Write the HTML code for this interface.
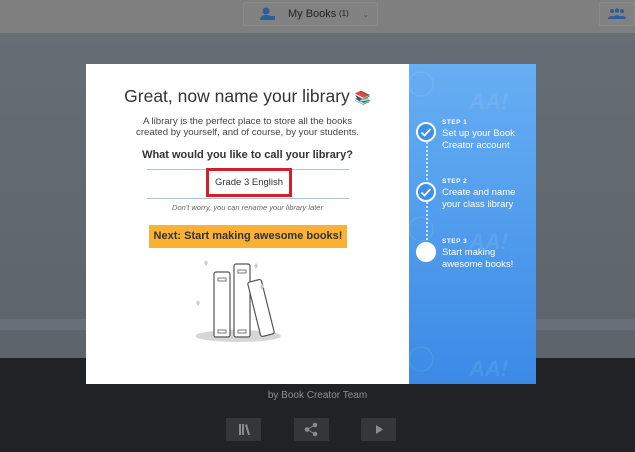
<!DOCTYPE html>
<html><head><meta charset="utf-8"><style>
*{margin:0;padding:0;box-sizing:border-box}
body{width:635px;height:452px;overflow:hidden;position:relative;font-family:"Liberation Sans",sans-serif;background:#5e656e}
.top{position:absolute;left:0;top:0;width:635px;height:33px;background:#7f7f7f}
.mb{position:absolute;left:243px;top:2px;width:135px;height:24px;border:1px solid #8a8a8a;background:#828282;border-radius:2px;font-size:11px;color:#222;line-height:22px}
.mid{position:absolute;left:0;top:33px;width:635px;height:325px;background:linear-gradient(#666d75,#5d646c)}
.band{position:absolute;left:0;top:319px;width:635px;height:11px;background:#686f78}
.bot{position:absolute;left:0;top:358px;width:635px;height:94px;background:#212226}
.btn{position:absolute;top:418px;width:35px;height:23px;background:#35363a}
.modal{position:absolute;left:86px;top:64px;width:450px;height:320px;background:#fff}
.blue{position:absolute;left:323px;top:0;width:127px;height:320px;background:linear-gradient(#67aef3,#3b8ae6)}
h1{position:absolute;left:0;width:323px;top:22px;text-align:center;font-size:17.5px;font-weight:normal;color:#333}
.p{position:absolute;left:0;width:323px;top:52px;text-align:center;font-size:9.6px;line-height:11px;color:#444}
.q{position:absolute;left:0;width:323px;top:85px;text-align:center;font-size:11px;font-weight:bold;color:#333}
.line{position:absolute;left:61px;width:202px;height:1px;background:#a9c4d4}
.box{position:absolute;left:120px;top:104px;width:86px;height:29px;border:3px solid #d0202c;text-align:center;font-size:9.5px;line-height:23px;color:#333}
.hint{position:absolute;left:0;width:323px;top:139px;text-align:center;font-size:7.5px;font-style:italic;color:#666}
.next{position:absolute;left:63px;top:161px;width:198px;height:23px;background:#f9b234;text-align:center;font-size:11px;font-weight:bold;color:#333;line-height:23px}
.st{position:absolute;left:356px;color:#fff}
.st b{display:block;font-size:6.5px;letter-spacing:.5px}
.st span{display:block;font-size:9.5px;line-height:11.5px;margin-top:2px}
.c{position:absolute;left:330px;width:20px;height:20px;border-radius:50%;border:2px solid #fff}
</style></head><body>
<div class="top"></div>
<div class="mb"><svg style="position:absolute;left:16px;top:4px" width="16" height="14" viewBox="0 0 16 14"><circle cx="6" cy="4" r="3.5" fill="#2f5d9a"/><path d="M0 13c0-4 3-5 6-5s5 1 5 2v3z" fill="#2f5d9a"/><rect x="10" y="9" width="5" height="4" fill="#2f5d9a"/></svg><span style="position:absolute;left:44px">My Books</span><span style="position:absolute;left:95px;font-size:8px">(1)</span><span style="position:absolute;left:118px;font-size:9px;color:#555">⌄</span></div>
<div style="position:absolute;left:599px;top:2px;width:36px;height:24px;border:1px solid #8a8a8a;background:#828282"><svg style="position:absolute;left:8px;top:5px" width="18" height="12" viewBox="0 0 18 12"><g fill="#2f5d9a"><circle cx="4" cy="3" r="2"/><circle cx="9" cy="2.5" r="2.2"/><circle cx="14" cy="3" r="2"/><path d="M0 11c0-4 8-4 8 0zM5 11c0-5 8-5 8 0zM10 11c0-4 8-4 8 0z"/></g></svg></div>
<div class="mid"></div><div class="band"></div>
<div class="bot"><div style="position:absolute;left:0;width:635px;top:32px;text-align:center;font-size:10px;color:#8e8f93">by Book Creator Team</div></div>
<div class="btn" style="left:226px"><svg width="35" height="23"><g fill="#8a8b8e"><rect x="13" y="6" width="2" height="11"/><rect x="16" y="6" width="2" height="11"/><path d="M19 7l2-1 3 11-2 0z"/></g></svg></div>
<div class="btn" style="left:294px"><svg width="35" height="23"><g fill="#8a8b8e" stroke="#8a8b8e"><circle cx="13" cy="11.5" r="1.8"/><circle cx="21" cy="7" r="1.8"/><circle cx="21" cy="16" r="1.8"/><path d="M13 11.5L21 7M13 11.5L21 16" fill="none"/></g></svg></div>
<div class="btn" style="left:361px"><svg width="35" height="23"><path d="M15 7l7 4.5-7 4.5z" fill="#8a8b8e"/></svg></div>
<div class="modal">
<h1>Great, now name your library <span style="font-size:13px;color:#3a7a3a">📚</span></h1>
<div class="p">A library is the perfect place to store all the books<br>created by yourself, and of course, by your students.</div>
<div class="q">What would you like to call your library?</div>
<div class="line" style="top:105px"></div><div class="line" style="top:134px"></div>
<div class="box">Grade 3 English</div>
<div class="hint">Don't worry, you can rename your library later</div>
<div class="next">Next: Start making awesome books!</div>
<svg style="position:absolute;left:110px;top:190px" width="90" height="90" viewBox="0 0 90 90"><ellipse cx="42" cy="82" rx="43" ry="6" fill="#d6d6d6"/><g fill="#fff" stroke="#555" stroke-width="1.2"><rect x="18" y="18" width="16" height="65" rx="2"/><rect x="38" y="10" width="16" height="73" rx="2"/><rect x="58" y="26" width="14" height="56" rx="2" transform="rotate(-14 65 54)"/></g><g fill="none" stroke="#777" stroke-width="1"><rect x="22" y="24" width="8" height="3"/><rect x="22" y="76" width="8" height="3"/><rect x="42" y="16" width="8" height="3"/><rect x="42" y="76" width="8" height="3"/></g><g fill="#ccc"><path d="M10 6l2 3-2 3-2-3z"/><path d="M60 9l2 3-2 3-2-3z"/><path d="M2 46l2 3-2 3-2-3z"/><path d="M66 30l2 3-2 3-2-3z"/></g></svg>
<div class="blue">
<svg width="127" height="320" style="position:absolute;left:0;top:0;opacity:.08"><g fill="none" stroke="#fff" stroke-width="1.5"><circle cx="12" cy="20" r="12"/><circle cx="12" cy="165" r="12"/><circle cx="12" cy="295" r="12"/></g><g fill="#fff" font-size="22" font-weight="bold" font-style="italic"><text x="60" y="45">AA!</text><text x="60" y="185">AA!</text><text x="60" y="312">AA!</text></g></svg>
</div>
<div style="position:absolute;left:340px;top:78px;height:110px;border-left:2px dotted #d0e4fb"></div>
<div class="c" style="top:58px;background:#3e8fe8"><svg width="16" height="16" viewBox="0 0 16 16"><path d="M3.5 8.5l3 3 6-6.5" fill="none" stroke="#fff" stroke-width="1.8"/></svg></div>
<div class="c" style="top:118px;background:#3e8fe8"><svg width="16" height="16" viewBox="0 0 16 16"><path d="M3.5 8.5l3 3 6-6.5" fill="none" stroke="#fff" stroke-width="1.8"/></svg></div>
<div class="c" style="top:178px;background:#fff"></div>
<div class="st" style="top:55px"><b>STEP 1</b><span>Set up your Book<br>Creator account</span></div>
<div class="st" style="top:114px"><b>STEP 2</b><span>Create and name<br>your class library</span></div>
<div class="st" style="top:174px"><b>STEP 3</b><span>Start making<br>awesome books!</span></div>
</div>
</body></html>
